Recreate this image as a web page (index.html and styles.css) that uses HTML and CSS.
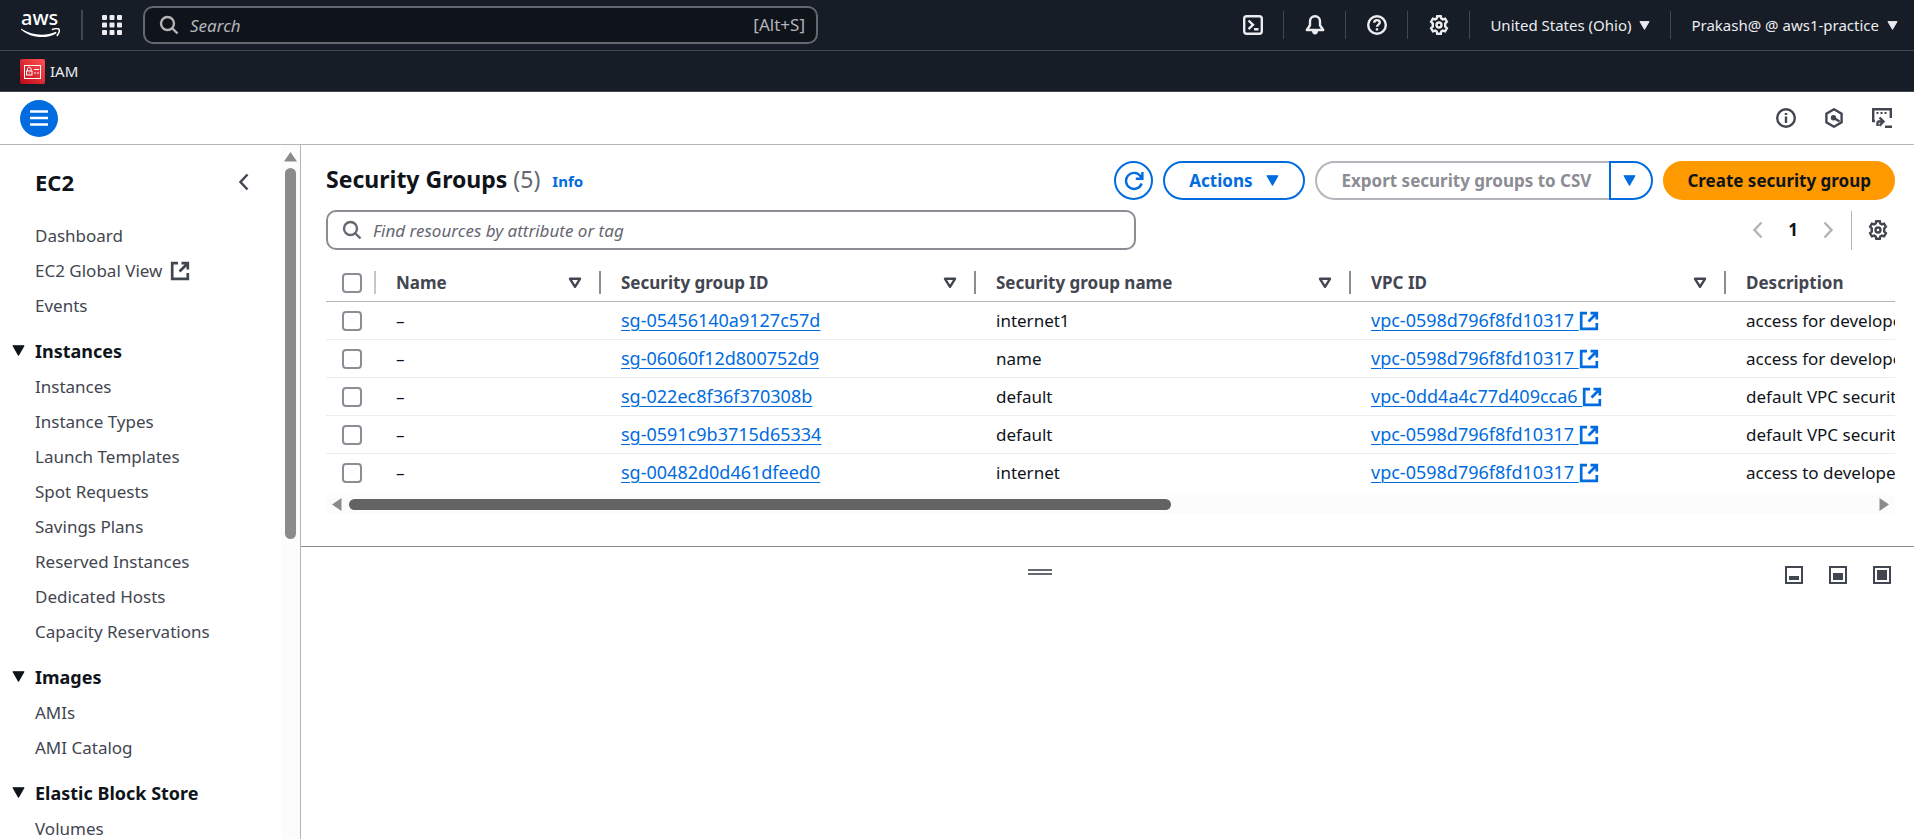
FILE: index.html
```
<!DOCTYPE html>
<html lang="en">
<head>
    <meta charset="UTF-8">
    <meta name="viewport" content="width=device-width, initial-scale=1.0">
    <title>Security Groups | EC2</title>
    <link rel="stylesheet" href="styles.css">
</head>
<body>
    <!-- shared icons -->
    <svg class="sprite" aria-hidden="true">
        <symbol id="i-search" viewBox="0 0 20 20"><circle cx="8.5" cy="8.5" r="6.5"/><path d="M13 13l5.5 5.5"/></symbol>
        <symbol id="i-external" viewBox="0 0 20 20"><path d="M8 2.2H2.2v15.6h15.6V12M11.5 2.2h6.3v6.3M17.5 2.5L9.5 10.5"/></symbol>
        <symbol id="i-caret" viewBox="0 0 12 10"><path d="M1 .7h10L6 9.3z"/></symbol>
        <symbol id="i-sort" viewBox="0 0 14 12"><path d="M2 1.8h10L7 9.8z"/></symbol>
        <symbol id="i-gear" viewBox="0 0 20 20"><path d="M8.2 1.2h3.6l.5 2.3 1.5.9 2.3-.8 1.8 3.1-1.7 1.7v3.2l1.7 1.7-1.8 3.1-2.3-.8-1.5.9-.5 2.3H8.2l-.5-2.3-1.5-.9-2.3.8-1.8-3.1 1.700-1.700V8.400L2.100 6.700l1.800-3.100 2.300.8 1.500-.9z"/><circle cx="10" cy="10" r="2.500"/></symbol>
        <symbol id="i-left" viewBox="0 0 12 18"><path d="M9.500 1.500L2.500 9l7 7.500"/></symbol>
        <symbol id="i-right" viewBox="0 0 12 18"><path d="M2.500 1.500l7 7.500-7 7.500"/></symbol>
    </svg>

    <header class="top-nav">
        <a href="#" class="logo" aria-label="AWS home">
            <span class="logo-text">aws</span>
            <svg class="logo-smile" viewBox="0 0 40 10"><path d="M0 .5c11 7 24 8 35 3.200l.6 1.500C25 11.500 9 10 0 1.500z" fill="#fff"/><path d="M31.500 1.400c2.500-.8 5.500-.9 6.500-.2.900 1-.2 4.300-1.800 6.300" fill="none" stroke="#fff" stroke-width="1.500" stroke-linecap="round"/></svg>
        </a>
        <button class="apps" aria-label="Services">
            <svg viewBox="0 0 20 20"><g fill="#ebebf0"><rect width="5" height="5" rx="1"/><rect x="7.500" width="5" height="5" rx="1"/><rect x="15" width="5" height="5" rx="1"/><rect y="7.500" width="5" height="5" rx="1"/><rect x="7.500" y="7.500" width="5" height="5" rx="1"/><rect x="15" y="7.500" width="5" height="5" rx="1"/><rect y="15" width="5" height="5" rx="1"/><rect x="7.500" y="15" width="5" height="5" rx="1"/><rect x="15" y="15" width="5" height="5" rx="1"/></g></svg>
        </button>
        <label class="nav-search">
            <svg class="icon"><use href="#i-search"/></svg>
            <input type="search" placeholder="Search" aria-label="Search">
            <span class="shortcut">[Alt+S]</span>
        </label>
        <div class="nav-tools">
            <button class="nav-icon" aria-label="CloudShell"><svg class="icon" viewBox="0 0 20 20"><rect x="1.200" y="1.200" width="17.600" height="17.600" rx="2.500"/><path d="M5.500 5.500L10 9.800l-4.500 4.300M11 14.300h4.500"/></svg></button>
            <button class="nav-icon" aria-label="Notifications"><svg class="icon" viewBox="0 0 20 20"><path d="M10 1.300c-3.200 0-5 2.300-5 5v4L1.800 15h16.400L15 10.300v-4c0-2.700-1.800-5-5-5z" stroke-linejoin="round"/><path d="M7.800 16.500c.2 1.400 1 2.200 2.200 2.200s2-.8 2.200-2.200z" fill="currentColor" stroke-width="1.500"/></svg></button>
            <button class="nav-icon" aria-label="Help"><svg class="icon" viewBox="0 0 20 20"><circle cx="10" cy="10" r="8.800"/><path d="M7.200 7.800c0-1.700 1.200-2.700 2.800-2.700s2.800 1 2.800 2.500c0 2.100-2.800 2-2.800 4.200M10 13.300v2.200"/></svg></button>
            <button class="nav-icon" aria-label="Settings"><svg class="icon"><use href="#i-gear"/></svg></button>
            <button class="nav-menu">United States (Ohio) <svg class="caret"><use href="#i-caret"/></svg></button>
            <button class="nav-menu">Prakash@ @ aws1-practice <svg class="caret"><use href="#i-caret"/></svg></button>
        </div>
    </header>

    <nav class="favorites">
        <a href="#">
            <svg class="iam" viewBox="0 0 25 25"><defs><linearGradient id="red" x1="0" y1="1" x2="1" y2="0"><stop offset="0" stop-color="#bd0816"/><stop offset="1" stop-color="#ff5252"/></linearGradient></defs><rect width="25" height="25" rx="2" fill="url(#red)"/><g fill="none" stroke="#fff"><rect x="4.500" y="6.500" width="16" height="13"/><rect x="6.500" y="12" width="5.500" height="4"/><path d="M7.500 12V9.800c0-2 3.500-2 3.500 0V12M14 10.500h5M14 14h2M17 14h2M9.200 13.500v1"/></g></svg>
            IAM
        </a>
    </nav>

    <div class="toolbar">
        <button class="menu-toggle" aria-label="Open navigation"><svg viewBox="0 0 18 16"><path d="M0 1.500h18M0 8h18M0 14.500h18" stroke="#fff" stroke-width="2.500"/></svg></button>
        <div class="toolbar-icons">
            <button aria-label="Info"><svg class="icon" viewBox="0 0 20 20"><circle cx="10" cy="10" r="8.800"/><path d="M10 8.500v6.500M10 5v2"/></svg></button>
            <button aria-label="Amazon Q"><svg class="icon" viewBox="0 0 20 20"><path d="M10 1.300l7.600 4.300v8.800L10 18.700l-7.600-4.300V5.600z"/><circle cx="9.500" cy="9.700" r="1.500" fill="currentColor"/><path d="M10 10l5.500 3.500"/></svg></button>
            <button aria-label="Console panel"><svg class="icon" viewBox="0 0 20 20"><path d="M3 13H1.200V1.200h17.600V10M5.500 13.500H11M7.500 9.500l4 4-4 4.300M5.500 13.500V18M13 18.800h7"/><path d="M4.500 5h2M8.500 5h2M12.500 5h2" stroke-width="2"/></svg></button>
        </div>
    </div>

    <div class="layout">
        <aside class="sidebar">
            <nav class="side-nav">
                <div class="side-head">
                    <a href="#">EC2</a>
                    <button aria-label="Close navigation"><svg class="arrow"><use href="#i-left"/></svg></button>
                </div>
                <ul>
                    <li><a href="#">Dashboard</a></li>
                    <li><a href="#">EC2 Global View <svg class="icon ext"><use href="#i-external"/></svg></a></li>
                    <li><a href="#">Events</a></li>
                </ul>
                <button class="section"><svg class="caret"><use href="#i-caret"/></svg>Instances</button>
                <ul>
                    <li><a href="#">Instances</a></li>
                    <li><a href="#">Instance Types</a></li>
                    <li><a href="#">Launch Templates</a></li>
                    <li><a href="#">Spot Requests</a></li>
                    <li><a href="#">Savings Plans</a></li>
                    <li><a href="#">Reserved Instances</a></li>
                    <li><a href="#">Dedicated Hosts</a></li>
                    <li><a href="#">Capacity Reservations</a></li>
                </ul>
                <button class="section"><svg class="caret"><use href="#i-caret"/></svg>Images</button>
                <ul>
                    <li><a href="#">AMIs</a></li>
                    <li><a href="#">AMI Catalog</a></li>
                </ul>
                <button class="section"><svg class="caret"><use href="#i-caret"/></svg>Elastic Block Store</button>
                <ul>
                    <li><a href="#">Volumes</a></li>
                </ul>
            </nav>
            <div class="vscroll" aria-hidden="true">
                <svg viewBox="0 0 13 10"><path d="M6.500 0L13 9.500H0z"/></svg>
                <span class="thumb"></span>
            </div>
        </aside>

        <div class="content">
            <main class="groups">
                <div class="groups-head">
                    <h1>Security Groups <span class="count">(5)</span></h1>
                    <a href="#" class="info">Info</a>
                    <div class="actions">
                        <button class="btn round" aria-label="Refresh"><svg class="icon" viewBox="0 0 20 20"><path d="M17.600 12.500A8 8 0 1 1 16.500 5.200L18 7.500M18.400 1v6.700h-6.600"/></svg></button>
                        <button class="btn">Actions <svg class="caret"><use href="#i-caret"/></svg></button>
                        <div class="split">
                            <button class="btn" disabled>Export security groups to CSV</button>
                            <button class="btn" aria-label="More export options"><svg class="caret"><use href="#i-caret"/></svg></button>
                        </div>
                        <button class="btn primary">Create security group</button>
                    </div>
                </div>

                <div class="filter-row">
                    <label class="filter">
                        <svg class="icon"><use href="#i-search"/></svg>
                        <input type="search" placeholder="Find resources by attribute or tag" aria-label="Find resources by attribute or tag">
                    </label>
                    <div class="pager">
                        <button disabled aria-label="Previous page"><svg class="arrow"><use href="#i-left"/></svg></button>
                        <button class="page">1</button>
                        <button disabled aria-label="Next page"><svg class="arrow"><use href="#i-right"/></svg></button>
                        <button class="prefs" aria-label="Preferences"><svg class="icon"><use href="#i-gear"/></svg></button>
                    </div>
                </div>

                <div class="table-wrap">
                    <table>
                        <colgroup><col class="c-check"><col class="c-name"><col class="c-data"><col class="c-data"><col class="c-data"><col></colgroup>
                        <thead>
                            <tr>
                                <th><div class="th"><input type="checkbox" aria-label="Select all"></div></th>
                                <th><div class="th">Name <svg class="sort"><use href="#i-sort"/></svg></div></th>
                                <th><div class="th">Security group ID <svg class="sort"><use href="#i-sort"/></svg></div></th>
                                <th><div class="th">Security group name <svg class="sort"><use href="#i-sort"/></svg></div></th>
                                <th><div class="th">VPC ID <svg class="sort"><use href="#i-sort"/></svg></div></th>
                                <th><div class="th">Description</div></th>
                            </tr>
                        </thead>
                        <tbody>
                            <tr>
                                <td><input type="checkbox" aria-label="Select sg-05456140a9127c57d"></td>
                                <td>–</td>
                                <td><a href="#">sg-05456140a9127c57d</a></td>
                                <td>internet1</td>
                                <td><a href="#">vpc-0598d796f8fd10317 <svg class="icon ext"><use href="#i-external"/></svg></a></td>
                                <td>access for developers</td>
                            </tr>
                            <tr>
                                <td><input type="checkbox" aria-label="Select sg-06060f12d800752d9"></td>
                                <td>–</td>
                                <td><a href="#">sg-06060f12d800752d9</a></td>
                                <td>name</td>
                                <td><a href="#">vpc-0598d796f8fd10317 <svg class="icon ext"><use href="#i-external"/></svg></a></td>
                                <td>access for developers</td>
                            </tr>
                            <tr>
                                <td><input type="checkbox" aria-label="Select sg-022ec8f36f370308b"></td>
                                <td>–</td>
                                <td><a href="#">sg-022ec8f36f370308b</a></td>
                                <td>default</td>
                                <td><a href="#">vpc-0dd4a4c77d409cca6 <svg class="icon ext"><use href="#i-external"/></svg></a></td>
                                <td>default VPC security group</td>
                            </tr>
                            <tr>
                                <td><input type="checkbox" aria-label="Select sg-0591c9b3715d65334"></td>
                                <td>–</td>
                                <td><a href="#">sg-0591c9b3715d65334</a></td>
                                <td>default</td>
                                <td><a href="#">vpc-0598d796f8fd10317 <svg class="icon ext"><use href="#i-external"/></svg></a></td>
                                <td>default VPC security group</td>
                            </tr>
                            <tr>
                                <td><input type="checkbox" aria-label="Select sg-00482d0d461dfeed0"></td>
                                <td>–</td>
                                <td><a href="#">sg-00482d0d461dfeed0</a></td>
                                <td>internet</td>
                                <td><a href="#">vpc-0598d796f8fd10317 <svg class="icon ext"><use href="#i-external"/></svg></a></td>
                                <td>access to developers</td>
                            </tr>
                        </tbody>
                    </table>
                </div>
                <div class="hscroll" aria-hidden="true">
                    <svg viewBox="0 0 10 13"><path d="M0 6.500L9.500 0v13z"/></svg>
                    <div class="track"><span class="thumb"></span></div>
                    <svg viewBox="0 0 10 13"><path d="M10 6.500L.5 0v13z"/></svg>
                </div>
            </main>

            <section class="split-panel">
                <div class="handle-area">
                    <button class="handle" aria-label="Resize panel"></button>
                </div>
                <div class="panel-sizes">
                    <button aria-label="Small panel"><svg viewBox="0 0 18 18"><rect x="1" y="1" width="16" height="16"/><path d="M4 10h10v4H4z"/></svg></button>
                    <button aria-label="Medium panel"><svg viewBox="0 0 18 18"><rect x="1" y="1" width="16" height="16"/><path d="M4 7h10v7H4z"/></svg></button>
                    <button aria-label="Full panel"><svg viewBox="0 0 18 18"><rect x="1" y="1" width="16" height="16"/><path d="M4 4h10v10H4z"/></svg></button>
                </div>
            </section>
        </div>
    </div>
</body>
</html>
```
FILE: styles.css
```
* {
    box-sizing: border-box;
}

body {
    margin: 0;
    height: 100vh;
    display: flex;
    flex-direction: column;
    overflow: hidden;
    font-family: "Noto Sans", "Open Sans", sans-serif;
    font-size: 17px;
    line-height: 24px;
    color: #0f141a;
    background-color: #fff;
}

button {
    font: inherit;
    color: inherit;
    background: none;
    border: none;
    padding: 0;
    cursor: pointer;
    display: flex;
    align-items: center;
}

a {
    color: #006ce0;
}

ul {
    list-style: none;
    margin: 0;
    padding: 0;
}

.sprite {
    display: none;
}

.icon {
    width: 20px;
    height: 20px;
    flex: none;
    fill: none;
    stroke: currentColor;
    stroke-width: 2.4;
}

.caret {
    width: 13px;
    height: 11px;
    flex: none;
    fill: currentColor;
    stroke: currentColor;
    stroke-width: 1;
    stroke-linejoin: round;
}

.arrow {
    width: 12px;
    height: 18px;
    fill: none;
    stroke: currentColor;
    stroke-width: 2.5;
}

.ext {
    stroke-width: 2.7;
}

/* Top navigation */
.top-nav {
    flex: none;
    height: 51px;
    display: flex;
    align-items: center;
    background-color: #161d26;
    border-bottom: 1px solid #424650;
    color: #ebebf0;
}

.logo {
    width: 83px;
    height: 30px;
    padding-left: 21px;
    border-right: 2px solid #424650;
    color: #fff;
    text-decoration: none;
}

.logo-text {
    display: block;
    height: 18px;
    font-size: 20px;
    line-height: 16px;
    font-weight: 500;
}

.logo-smile {
    display: block;
    width: 40px;
    height: 10px;
}

.apps {
    margin: 0 21px 0 19px;
}

.apps svg {
    width: 20px;
    height: 20px;
}

.nav-search {
    display: flex;
    align-items: center;
    width: 675px;
    height: 38px;
    padding: 0 11px 0 14px;
    background-color: #0f141a;
    border: 2px solid #656871;
    border-radius: 10px;
    color: #b4b4bb;
}

.nav-search .icon,
.filter .icon {
    width: 20px;
    height: 20px;
}

input[type="search"] {
    flex: 1;
    min-width: 0;
    height: 30px;
    margin-left: 11px;
    padding: 0;
    font: inherit;
    color: inherit;
    background: none;
    border: none;
    outline: none;
}

input::placeholder {
    color: inherit;
    font-style: italic;
    opacity: 1;
}

.nav-tools {
    display: flex;
    align-items: center;
    margin-left: auto;
}

.nav-icon,
.nav-menu {
    height: 28px;
    border-right: 1px solid #424650;
}

.nav-icon {
    width: 62px;
    justify-content: center;
}

.nav-menu {
    padding: 0 20px;
    gap: 8px;
    font-size: 15px;
}

.nav-menu .caret {
    width: 11px;
}

.nav-menu:last-child {
    border: none;
    padding-right: 16px;
}

/* Favorites bar */
.favorites {
    flex: none;
    display: flex;
    align-items: center;
    height: 41px;
    padding-left: 20px;
    background-color: #161d26;
    border-bottom: 1px solid #424650;
    font-size: 15px;
}

.favorites a {
    display: flex;
    align-items: center;
    gap: 5px;
    color: #ebebf0;
    text-decoration: none;
}

.iam {
    width: 25px;
    height: 25px;
}

/* Page toolbar */
.toolbar {
    flex: none;
    display: flex;
    align-items: center;
    justify-content: space-between;
    height: 53px;
    padding: 0 22px 0 20px;
    border-bottom: 1px solid #b4b4bb;
    color: #424650;
}

.menu-toggle {
    width: 38px;
    height: 37px;
    justify-content: center;
    background-color: #006ce0;
    border-radius: 50%;
}

.menu-toggle svg {
    width: 18px;
    height: 16px;
}

.toolbar-icons {
    display: flex;
    gap: 28px;
}

.layout {
    flex: 1;
    min-height: 0;
    display: flex;
}

/* Sidebar */
.sidebar {
    flex: none;
    width: 301px;
    display: flex;
    overflow: hidden;
    border-right: 1px solid #b4b4bb;
    color: #424650;
}

.side-nav {
    flex: 1;
}

.side-head {
    display: flex;
    align-items: center;
    justify-content: space-between;
    height: 73px;
    padding: 0 31px 0 35px;
}

.side-head a {
    font-size: 22px;
    font-weight: 700;
    color: #0f141a;
    text-decoration: none;
}

.side-nav li {
    height: 35px;
    padding-left: 35px;
}

.side-nav li a {
    display: flex;
    align-items: center;
    gap: 8px;
    height: 35px;
    color: inherit;
    text-decoration: none;
}

.section {
    height: 46px;
    padding: 9px 0 0 12px;
    gap: 10px;
    font-size: 18px;
    font-weight: 700;
    color: #0f141a;
}

.vscroll {
    flex: none;
    width: 19px;
    display: flex;
    flex-direction: column;
    align-items: center;
    padding-top: 7px;
    gap: 6px;
    background-color: #fcfcfc;
    fill: #8b8b8b;
}

.vscroll svg {
    width: 13px;
    height: 10px;
}

.vscroll .thumb {
    width: 11px;
    height: 54%;
    border-radius: 6px;
    background-color: #8b8b8b;
}

/* Security groups table */
.content {
    flex: 1;
    min-width: 0;
    display: flex;
    flex-direction: column;
}

.groups {
    padding: 16px 19px 32px 25px;
    border-bottom: 1px solid #8c8c94;
}

.groups-head {
    display: flex;
    align-items: flex-start;
    height: 39px;
}

h1 {
    margin: 0;
    font-size: 23px;
    line-height: 36px;
}

.count {
    font-weight: 400;
    color: #656871;
}

.info {
    margin: 8px 0 0 12px;
    font-size: 15px;
    font-weight: 700;
    text-decoration: none;
}

.actions {
    display: flex;
    gap: 10px;
    margin-left: auto;
}

.btn {
    height: 39px;
    justify-content: center;
    padding: 0 24px;
    gap: 14px;
    border: 2px solid #006ce0;
    border-radius: 20px;
    color: #006ce0;
    font-weight: 700;
    white-space: nowrap;
}

.btn:disabled {
    border-color: #b4b4bb;
    color: #8c8c94;
    cursor: default;
}

.round {
    width: 39px;
    padding: 0;
}

.split {
    display: flex;
}

.split .btn:first-child {
    padding-right: 18px;
    border-right: none;
    border-radius: 20px 0 0 20px;
}

.split .btn:last-child {
    width: 44px;
    padding: 0 4px 0 0;
    border-radius: 0 20px 20px 0;
}

.btn.primary {
    padding: 0 22px;
    background-color: #ff9900;
    border-color: #ff9900;
    color: #0f141a;
}

.filter-row {
    display: flex;
    align-items: center;
    justify-content: space-between;
    margin-top: 10px;
}

.filter {
    display: flex;
    align-items: center;
    width: 810px;
    height: 40px;
    padding: 0 14px;
    border: 2px solid #8c8c94;
    border-radius: 10px;
    color: #656871;
}

.pager {
    display: flex;
    align-items: center;
    color: #424650;
}

.pager button:disabled {
    color: #b4b4bb;
}

.pager .page {
    padding: 0 24px;
    font-weight: 700;
    color: #0f141a;
}

.pager .prefs {
    height: 39px;
    margin-left: 17px;
    padding: 0 7px 0 16px;
    border-left: 1px solid #b4b4bb;
}

.table-wrap {
    margin-top: 12px;
    overflow: hidden;
}

table {
    width: 1900px;
    table-layout: fixed;
    border-collapse: separate;
    border-spacing: 0;
}

.c-check {
    width: 50px;
}

.c-name {
    width: 225px;
}

.c-data {
    width: 375px;
}

th,
td {
    padding: 0 0 0 20px;
    text-align: left;
    white-space: nowrap;
}

th {
    height: 40px;
    padding-top: 2px;
    border-bottom: 1px solid #b4b4bb;
    color: #424650;
}

td {
    height: 38px;
    border-bottom: 1px solid #ebebf0;
}

tr:last-child td {
    border-color: transparent;
}

th:first-child,
td:first-child {
    padding-left: 16px;
}

.th {
    display: flex;
    align-items: center;
    justify-content: space-between;
    height: 23px;
    padding-right: 17px;
    border-right: 2px solid #8c8c94;
}

th:first-child .th {
    border-color: #c6c6cd;
}

.sort {
    width: 14px;
    height: 12px;
    fill: none;
    stroke: currentColor;
    stroke-width: 2.4;
    stroke-linejoin: round;
}

input[type="checkbox"] {
    appearance: none;
    display: block;
    flex: none;
    width: 20px;
    height: 20px;
    margin: 0;
    border: 2px solid #8c8c94;
    border-radius: 4px;
}

td a {
    font-size: 18px;
    text-decoration-thickness: 1px;
    text-underline-offset: 3px;
}

td .ext {
    vertical-align: -4px;
}

.hscroll {
    display: flex;
    align-items: center;
    gap: 7px;
    height: 19px;
    margin-top: 3px;
    padding: 0 6px;
    background-color: #fcfcfc;
    fill: #8b8b8b;
}

.hscroll svg {
    width: 10px;
    height: 13px;
}

.track {
    flex: 1;
}

.hscroll .thumb {
    display: block;
    width: 54%;
    height: 11px;
    border-radius: 6px;
    background-color: #636363;
}

/* Bottom panel */
.split-panel {
    display: flex;
    gap: 31px;
    padding: 19px 23px 0 25px;
}

.handle-area {
    flex: 1;
    display: flex;
    justify-content: center;
}

.handle {
    width: 24px;
    height: 6px;
    margin-top: 3px;
    border: solid #656871;
    border-width: 2px 0;
    cursor: row-resize;
}

.panel-sizes {
    display: flex;
    gap: 26px;
}

.panel-sizes svg {
    width: 18px;
    height: 18px;
    fill: #424650;
}

.panel-sizes rect {
    fill: none;
    stroke: #424650;
    stroke-width: 2;
}
```
